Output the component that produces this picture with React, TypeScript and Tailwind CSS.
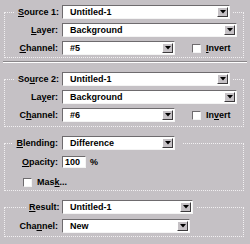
import type { ReactNode } from 'react';

// sunken edge used by the text fields and check boxes
const sunken = 'border border-t-[#6e6b6e] border-l-[#6e6b6e] border-b-[#f4f4f4] border-r-[#f4f4f4] bg-white';

function Arrow() {
  return (
    <div className="flex h-full w-[11px] shrink-0 items-center justify-center border border-t-white border-l-white border-b-[#3c3a3c] border-r-[#3c3a3c] bg-[#c5c1c5]">
      <svg width="6" height="4" viewBox="0 0 6 4">
        <path d="M0 0h6L3 3.5z" fill="#000" />
      </svg>
    </div>
  );
}

function Select({ value, w }: { value: string; w: string }) {
  return (
    <div className={`flex h-[14px] ${w} shrink-0 items-stretch p-px ${sunken}`}>
      <span className="flex-1 truncate pl-[6px] leading-[10px]">{value}</span>
      <Arrow />
    </div>
  );
}

function Check() {
  return <span className={`block h-[9px] w-[9px] shrink-0 ${sunken}`} />;
}

function Row({ label, children, className = '' }: { label: ReactNode; children: ReactNode; className?: string }) {
  return (
    <div className={`flex h-[14px] items-center gap-[4px] ${className}`}>
      <span className="w-[53px] shrink-0 text-right">{label}</span>
      {children}
    </div>
  );
}

function Group({
  legend,
  children,
  className = '',
}: {
  legend: ReactNode;
  children: ReactNode;
  className?: string;
}) {
  return (
    <fieldset className={`ml-[4px] w-[240px] border border-dotted border-[#f2f0f2] ${className}`}>
      {legend}
      {children}
    </fieldset>
  );
}

function Head({ label, labelW, ml, pr, children }: { label: ReactNode; labelW: string; ml: string; pr: string; children: ReactNode }) {
  return (
    <legend className={`${ml} ${pr} pl-[3px]`}>
      <div className="flex h-[14px] items-center gap-[4px]">
        <span className={`${labelW} shrink-0 text-right`}>{label}</span>
        {children}
      </div>
    </legend>
  );
}

export default function App() {
  return (
    <div className="h-[244px] w-[250px] overflow-hidden whitespace-nowrap bg-[#c5c1c5] pt-[5px] font-['Liberation_Sans',Arial,sans-serif] text-[9px] font-bold leading-none text-black">
      {/* Source 1 */}
      <Group
        className="pb-[2px]"
        legend={
          <Head label={<><u>S</u>ource 1:</>} labelW="w-[40px]" ml="ml-[10px]" pr="pr-[3px]">
            <Select value="Untitled-1" w="w-[168px]" />
          </Head>
        }
      >
        <Row label={<><u>L</u>ayer:</>} className="mt-[4px]">
          <Select value="Background" w="w-[175px]" />
        </Row>
        <Row label={<><u>C</u>hannel:</>} className="mt-[4px]">
          <Select value="#5" w="w-[113px]" />
          <span className="ml-[13px]"><Check /></span>
          <span className="ml-px"><u>I</u>nvert</span>
        </Row>
      </Group>

      <div className="ml-[3px] mt-[3px] h-[2px] w-[244px] border-t border-b border-t-[#8a878a] border-b-white" />

      {/* Source 2 */}
      <Group
        className="mt-[9px] pb-[4px]"
        legend={
          <Head label={<>So<u>u</u>rce 2:</>} labelW="w-[40px]" ml="ml-[10px]" pr="pr-[3px]">
            <Select value="Untitled-1" w="w-[168px]" />
          </Head>
        }
      >
        <Row label={<>La<u>y</u>er:</>} className="mt-[4px]">
          <Select value="Background" w="w-[175px]" />
        </Row>
        <Row label={<>C<u>h</u>annel:</>} className="mt-[4px]">
          <Select value="#6" w="w-[113px]" />
          <span className="ml-[13px]"><Check /></span>
          <span className="ml-px">In<u>v</u>ert</span>
        </Row>
      </Group>

      {/* Blending */}
      <Group
        className="mt-[9px] pb-px"
        legend={
          <Head label={<><u>B</u>lending:</>} labelW="w-[42px]" ml="ml-[8px]" pr="pr-[7px]">
            <Select value="Difference" w="w-[113px]" />
          </Head>
        }
      >
        <Row label={<><u>O</u>pacity:</>} className="mt-[5px]">
          <div className={`flex h-[12px] w-[24px] items-center pl-[2px] ${sunken}`}>100</div>
          <span>%</span>
        </Row>
        <div className="mt-[7px] flex h-[13px] items-center pl-[18px]">
          <Check />
          <span className="ml-[5px]">Mas<u>k</u>...</span>
        </div>
      </Group>

      {/* Result */}
      <Group
        className="mt-[9px] pb-[3px]"
        legend={
          <Head label={<><u>R</u>esult:</>} labelW="w-[29px]" ml="ml-[21px]" pr="pr-[4px]">
            <Select value="Untitled-1" w="w-[131px]" />
          </Head>
        }
      >
        <Row label={<>Cha<u>n</u>nel:</>} className="mt-[5px]">
          <Select value="New" w="w-[128px]" />
        </Row>
      </Group>
    </div>
  );
}
